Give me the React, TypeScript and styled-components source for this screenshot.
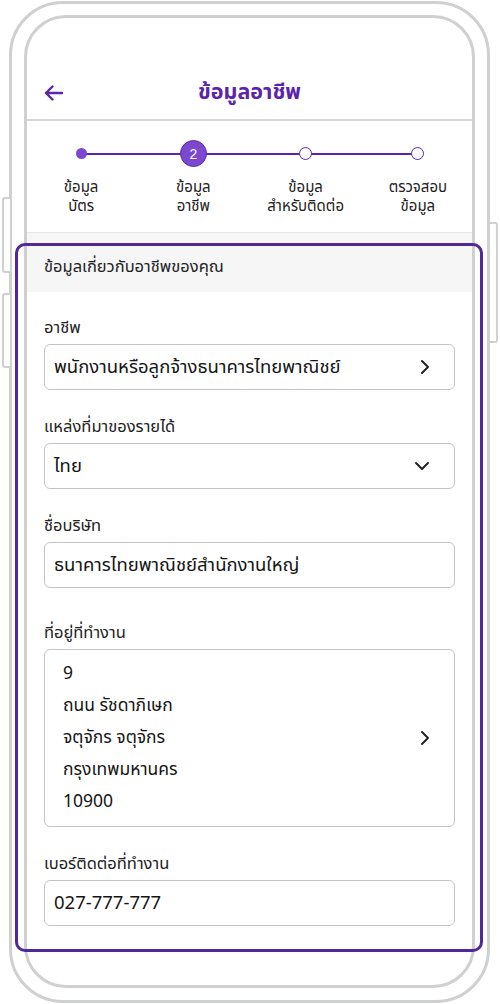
import React from "react";
import styled, { createGlobalStyle } from "styled-components";

const GlobalStyle = createGlobalStyle`
  html, body { margin: 0; padding: 0; background: #ffffff; }
  body { font-family: "Noto Sans Thai", "Noto Sans", "Liberation Sans", sans-serif; color: #1f1f1f; }
  * { box-sizing: border-box; }
`;

const PURPLE = "#5a24ad";
const FRAME = "#cfd0d0";

const Phone = styled.div`
  position: relative;
  margin: 1px 0 0 9px;
  width: 481px;
  height: 1002px;
  border: 3px solid ${FRAME};
  border-radius: 54px;
  padding: 11px 12px 12px 12px;
`;

const SideButton = styled.div<{ $side: "left" | "right"; $top: number; $h: number }>`
  position: absolute;
  top: ${(p) => p.$top}px;
  ${(p) => (p.$side === "left" ? "left: -10px;" : "right: -11px;")}
  width: 8px;
  height: ${(p) => p.$h}px;
  border: 2px solid ${FRAME};
  ${(p) => (p.$side === "left" ? "border-right: none; border-radius: 3px 0 0 3px;" : "border-left: none; border-radius: 0 3px 3px 0;")}
  background: #fff;
`;

const Screen = styled.div`
  height: 100%;
  border: 3px solid ${FRAME};
  border-radius: 42px;
  display: flex;
  flex-direction: column;
`;

const Header = styled.header`
  height: 103px;
  padding: 57px 17px 0 17px;
  border-bottom: 2px solid #d6d6d6;
  display: grid;
  grid-template-columns: 40px 1fr 40px;
  align-items: start;
`;

const BackButton = styled.button`
  border: none;
  background: none;
  padding: 0;
  height: 36px;
  display: flex;
  align-items: center;
  color: ${PURPLE};
`;

const Title = styled.h1`
  margin: 0;
  text-align: center;
  font-size: 21.5px;
  line-height: 36px;
  font-weight: 700;
  color: ${PURPLE};
`;

const Stepper = styled.div`
  margin: 0 -2px;
  padding-top: 19px;
  height: 111px;
  display: grid;
  grid-template-columns: repeat(4, 1fr);
`;

const Step = styled.div<{ $first?: boolean; $last?: boolean }>`
  position: relative;
  display: flex;
  flex-direction: column;
  align-items: center;
  &::before, &::after {
    content: "";
    position: absolute;
    top: 13px;
    height: 1.5px;
    background: ${PURPLE};
    width: 50%;
  }
  &::before { left: 0; display: ${(p) => (p.$first ? "none" : "block")}; }
  &::after { right: 0; display: ${(p) => (p.$last ? "none" : "block")}; }
`;

const DotSlot = styled.div`
  height: 27px;
  display: flex;
  align-items: center;
  justify-content: center;
  position: relative;
  z-index: 1;
`;

const Dot = styled.div<{ $kind: "done" | "active" | "todo" }>`
  border-radius: 50%;
  display: flex;
  align-items: center;
  justify-content: center;
  color: #fff;
  font-size: 14px;
  font-family: "Liberation Sans", sans-serif;
  ${(p) =>
    p.$kind === "done"
      ? `width: 11px; height: 11px; background: #7b48cf;`
      : p.$kind === "active"
      ? `width: 27px; height: 27px; background: #7b48cf; border: 1.5px solid #5a28b0;`
      : `width: 13px; height: 13px; background: #fff; border: 1.5px solid ${PURPLE};`}
`;

const StepLabel = styled.div`
  margin-top: 11px;
  text-align: center;
  font-size: 15px;
  line-height: 19px;
  color: #222;
  white-space: pre-line;
`;

const SectionBand = styled.div`
  border-top: 1px solid #e8e8e8;
  background: #f6f6f7;
  height: 60px;
  padding: 23px 17px 0 17px;
  font-size: 16.5px;
  line-height: 22px;
  color: #222;
`;

const Form = styled.div`
  padding: 24px 17px 0 17px;
  display: flex;
  flex-direction: column;
`;

const Field = styled.div<{ $gap?: number }>`
  margin-bottom: ${(p) => p.$gap ?? 25}px;
`;

const Label = styled.div`
  font-size: 16.5px;
  line-height: 24px;
  margin-bottom: 4px;
  color: #222;
`;

const InputBox = styled.div<{ $tall?: boolean }>`
  border: 1px solid #c4c4c4;
  border-radius: 6px;
  min-height: 46px;
  display: flex;
  align-items: center;
  justify-content: space-between;
  padding: ${(p) => (p.$tall ? "8px 24px 8px 18px" : "0 24px 0 9px")};
  font-size: 18.5px;
  color: #151515;
`;

const AddressLines = styled.div`
  display: flex;
  flex-direction: column;
  line-height: 32px;
  font-size: 17.5px;
`;

const Highlight = styled.div`
  position: absolute;
  left: 3px;
  top: 239px;
  width: 468px;
  height: 709px;
  border: 3px solid #50289a;
  border-radius: 10px;
  pointer-events: none;
`;

const ChevronRight = () => (
  <svg width="10" height="16" viewBox="0 0 10 16" fill="none">
    <path d="M2 2l6 6-6 6" stroke="#222" strokeWidth="2" strokeLinecap="round" strokeLinejoin="round" />
  </svg>
);

const ChevronDown = () => (
  <svg width="16" height="10" viewBox="0 0 16 10" fill="none">
    <path d="M2 2l6 6 6-6" stroke="#222" strokeWidth="2" strokeLinecap="round" strokeLinejoin="round" />
  </svg>
);

const steps: { label: string; kind: "done" | "active" | "todo" }[] = [
  { label: "ข้อมูล\nบัตร", kind: "done" },
  { label: "ข้อมูล\nอาชีพ", kind: "active" },
  { label: "ข้อมูล\nสำหรับติดต่อ", kind: "todo" },
  { label: "ตรวจสอบ\nข้อมูล", kind: "todo" },
];

export default function App() {
  return (
    <>
      <GlobalStyle />
      <Phone>
        <SideButton $side="left" $top={193} $h={76} />
        <SideButton $side="left" $top={289} $h={75} />
        <SideButton $side="right" $top={218} $h={121} />
        <Screen>
          <Header>
            <BackButton aria-label="back">
              <svg width="20" height="16" viewBox="0 0 20 16" fill="none">
                <path d="M18 8H2M8.5 1.5L2 8l6.5 6.5" stroke={PURPLE} strokeWidth="2.4" strokeLinecap="round" strokeLinejoin="round" />
              </svg>
            </BackButton>
            <Title>ข้อมูลอาชีพ</Title>
            <span />
          </Header>
          <Stepper>
            {steps.map((s, i) => (
              <Step key={i} $first={i === 0} $last={i === steps.length - 1}>
                <DotSlot>
                  <Dot $kind={s.kind}>{s.kind === "active" ? "2" : null}</Dot>
                </DotSlot>
                <StepLabel>{s.label}</StepLabel>
              </Step>
            ))}
          </Stepper>
          <SectionBand>ข้อมูลเกี่ยวกับอาชีพของคุณ</SectionBand>
          <Form>
            <Field>
              <Label>อาชีพ</Label>
              <InputBox>
                <span>พนักงานหรือลูกจ้างธนาคารไทยพาณิชย์</span>
                <ChevronRight />
              </InputBox>
            </Field>
            <Field>
              <Label>แหล่งที่มาของรายได้</Label>
              <InputBox>
                <span>ไทย</span>
                <ChevronDown />
              </InputBox>
            </Field>
            <Field $gap={33}>
              <Label>ชื่อบริษัท</Label>
              <InputBox>
                <span>ธนาคารไทยพาณิชย์สำนักงานใหญ่</span>
              </InputBox>
            </Field>
            <Field>
              <Label>ที่อยู่ที่ทำงาน</Label>
              <InputBox $tall>
                <AddressLines>
                  <span>9</span>
                  <span>ถนน รัชดาภิเษก</span>
                  <span>จตุจักร จตุจักร</span>
                  <span>กรุงเทพมหานคร</span>
                  <span>10900</span>
                </AddressLines>
                <ChevronRight />
              </InputBox>
            </Field>
            <Field>
              <Label>เบอร์ติดต่อที่ทำงาน</Label>
              <InputBox>
                <span>027-777-777</span>
              </InputBox>
            </Field>
          </Form>
        </Screen>
        <Highlight />
      </Phone>
    </>
  );
}
